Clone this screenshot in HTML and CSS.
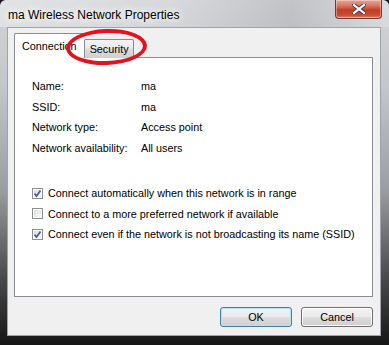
FILE: index.html
```html
<!DOCTYPE html>
<html>
<head>
<meta charset="utf-8">
<link rel="stylesheet" href="styles.css">
</head>
<body>
<div class="window">
  <div class="titlebar">
    <span class="title">ma Wireless Network Properties</span>
    <div class="close">
      <svg width="14" height="10" viewBox="0 0 14 10">
        <path d="M2 1 L12 9 M12 1 L2 9" stroke="#3a3f47" stroke-width="4" stroke-linecap="square"/>
        <path d="M2 1 L12 9 M12 1 L2 9" stroke="#ffffff" stroke-width="2.2" stroke-linecap="square"/>
      </svg>
    </div>
  </div>
  <div class="client">
    <div class="tabs">
      <div class="tab active">Connection</div>
      <div class="tab">Security</div>
    </div>
    <div class="panel">
      <div class="props">
        <span>Name:</span><span>ma</span>
        <span>SSID:</span><span>ma</span>
        <span>Network type:</span><span>Access point</span>
        <span>Network availability:</span><span>All users</span>
      </div>
      <div class="checks">
        <div class="check"><span class="box checked"><svg width="9" height="9" viewBox="0 0 9 9"><path d="M1.5 4.5 L3.5 7 L7.5 1.5" fill="none" stroke="#4b5f99" stroke-width="1.8"/></svg></span><span>Connect automatically when this network is in range</span></div>
        <div class="check"><span class="box"></span><span>Connect to a more preferred network if available</span></div>
        <div class="check"><span class="box checked"><svg width="9" height="9" viewBox="0 0 9 9"><path d="M1.5 4.5 L3.5 7 L7.5 1.5" fill="none" stroke="#4b5f99" stroke-width="1.8"/></svg></span><span>Connect even if the network is not broadcasting its name (SSID)</span></div>
      </div>
    </div>
    <div class="buttons">
      <div class="btn default">OK</div>
      <div class="btn">Cancel</div>
    </div>
  </div>
  <div class="ring"></div>
</div>
</body>
</html>
```
FILE: styles.css
```css
html, body {
  margin: 0;
  padding: 0;
  background: #1a1a1a;
}
.window {
  position: relative;
  width: 389px;
  height: 345px;
  box-sizing: border-box;
  border-radius: 6px 6px 0 0;
  background: linear-gradient(180deg, #d2d4d7 0%, #c3c6ca 25%, #9a9da1 55%, #4a4b4d 80%, #161616 100%);
  font-family: "Liberation Sans", Arial, sans-serif;
  font-size: 10.8px;
  color: #000;
  display: flex;
  flex-direction: column;
  overflow: hidden;
}
.titlebar {
  height: 27px;
  display: flex;
  align-items: flex-start;
  padding-left: 8px;
  background: linear-gradient(90deg, rgba(255,255,255,0.35) 0%, rgba(255,255,255,0.1) 45%, rgba(0,0,0,0.08) 75%, rgba(255,255,255,0.2) 100%);
}
.title {
  margin-top: 8px;
  font-size: 12px;
  color: #000;
  text-shadow: 0 0 6px #fff, 0 0 10px #fff, 0 0 14px #fff;
}
.close {
  margin-left: auto;
  margin-right: 7px;
  width: 47px;
  height: 19px;
  box-sizing: border-box;
  border: 1px solid #6b3c36;
  border-top: none;
  border-radius: 0 0 4px 4px;
  background: linear-gradient(180deg, #e8a596 0%, #d7705c 35%, #c33d23 55%, #c64e36 85%, #d98a72 100%);
  box-shadow: inset 0 0 0 1px rgba(255,255,255,0.35);
  display: flex;
  align-items: center;
  justify-content: center;
}
.client {
  margin: 0 8px 9px 7px;
  flex: 1;
  background: #f0f0f0;
  border: 1px solid #a0a4a8;
  box-sizing: border-box;
  padding: 5px 7px 0 6px;
  display: flex;
  flex-direction: column;
}
.tabs {
  display: flex;
  align-items: flex-end;
  height: 25px;
  position: relative;
  z-index: 1;
  margin-bottom: -1px;
}
.tab {
  height: 19px;
  box-sizing: border-box;
  border: 1px solid #898c95;
  border-bottom: none;
  padding: 3px 4px 0 5px;
  background: linear-gradient(180deg, #f2f2f2 0%, #ebebeb 45%, #dddddd 50%, #cfcfcf 100%);
  border-radius: 2px 2px 0 0;
}
.tab.active {
  height: 25px;
  background: #fff;
  padding: 6px 7px 0 7px;
  border-right: none;
}
.panel {
  height: 240px;
  background: #fff;
  border: 1px solid #898c95;
  box-sizing: border-box;
  padding: 18px 0 0 17px;
}
.props {
  display: grid;
  grid-template-columns: 109px auto;
  row-gap: 0;
  line-height: 20.5px;
}
.checks {
  margin-top: 25px;
  display: flex;
  flex-direction: column;
}
.check {
  display: flex;
  align-items: center;
  height: 20.5px;
  gap: 5px;
}
.box {
  width: 11px;
  height: 11px;
  box-sizing: border-box;
  border: 1px solid #8e8f8f;
  background: linear-gradient(135deg, #d8dbe0 0%, #eef0f2 60%, #fafafa 100%);
  box-shadow: inset 0 0 0 1px #fff;
  display: flex;
  align-items: center;
  justify-content: center;
}
.buttons {
  display: flex;
  justify-content: flex-end;
  gap: 9px;
  margin-top: 10px;
}
.btn {
  width: 72px;
  height: 20px;
  box-sizing: border-box;
  border: 1px solid #707070;
  border-radius: 3px;
  background: linear-gradient(180deg, #f2f2f2 0%, #ebebeb 48%, #dddddd 52%, #cfcfcf 100%);
  box-shadow: inset 0 0 0 1px rgba(255,255,255,0.8);
  display: flex;
  align-items: center;
  justify-content: center;
}
.btn.default {
  border-color: #3c7fb1;
  box-shadow: inset 0 0 0 1px #b4e2f8;
}
.ring {
  position: absolute;
  z-index: 2;
  left: 66px;
  top: 29px;
  width: 81px;
  height: 36px;
  box-sizing: border-box;
  border: 4px solid #e4121c;
  border-radius: 50%;
  transform: rotate(-2deg);
}
```
